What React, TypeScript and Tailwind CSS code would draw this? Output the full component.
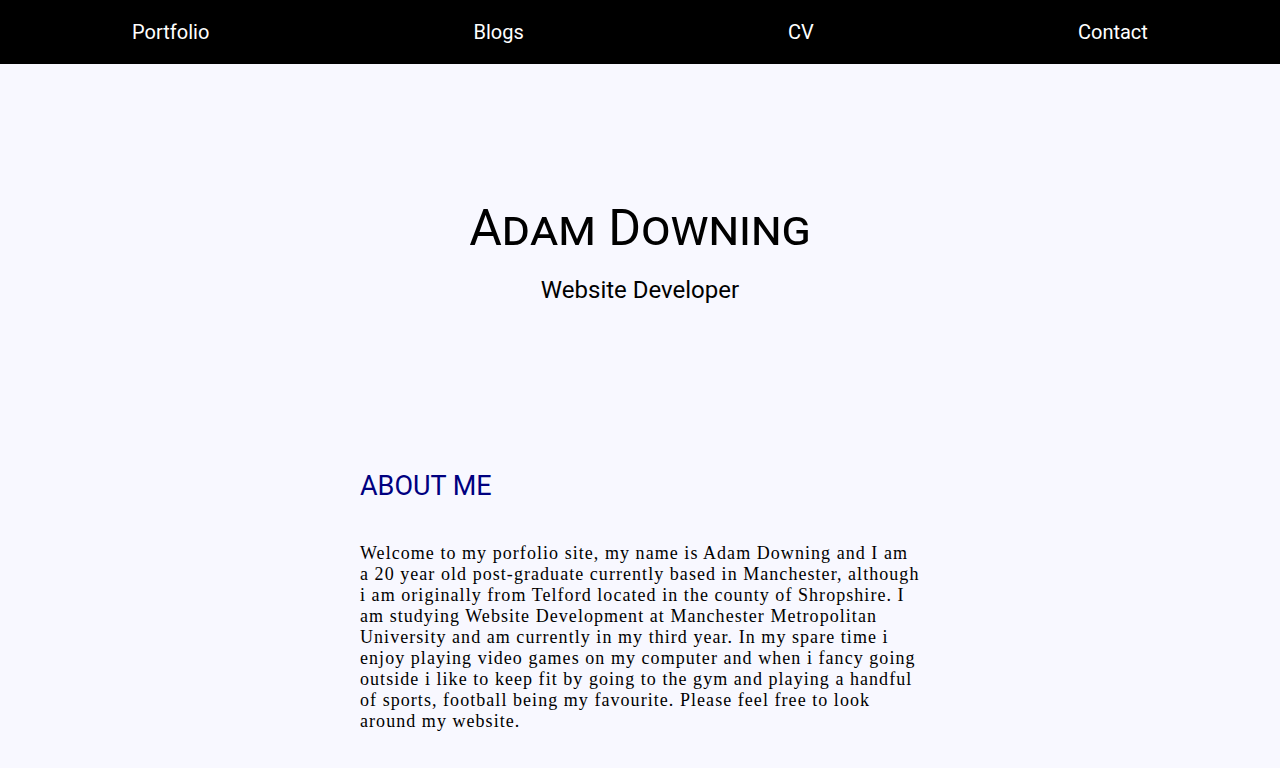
import React from "react";

const links = ["Portfolio", "Blogs", "CV", "Contact"];

const App = () => {
  return (
    <div className="min-h-screen w-full bg-[#f8f8ff] font-['Roboto',sans-serif] text-black">
      <nav className="flex h-16 items-center justify-around bg-black">
        {links.map((l) => (
          <a key={l} className="text-[20px] text-white">
            {l}
          </a>
        ))}
      </nav>

      <header className="flex h-[340px] flex-col items-center justify-center pt-[37px]">
        <h1 className="text-[50px] leading-none [font-variant:small-caps]">Adam Downing</h1>
        <p className="mt-[25px] text-[24px] leading-none">Website Developer</p>
      </header>

      <section className="mx-auto w-[560px] pt-[69px]">
        <h2 className="text-[27px] leading-none text-[#000080]">ABOUT ME</h2>
        <p className="mt-[43px] font-['Liberation_Serif',serif] text-[18px] tracking-[1.05px] leading-[21px]">
          Welcome to my porfolio site, my name is Adam Downing and I am a 20 year old post-graduate
          currently based in Manchester, although i am originally from Telford located in the county
          of Shropshire. I am studying Website Development at Manchester Metropolitan University and
          am currently in my third year. In my spare time i enjoy playing video games on my computer
          and when i fancy going outside i like to keep fit by going to the gym and playing a handful
          of sports, football being my favourite. Please feel free to look around my website.
        </p>
      </section>
    </div>
  );
};

export default App;
